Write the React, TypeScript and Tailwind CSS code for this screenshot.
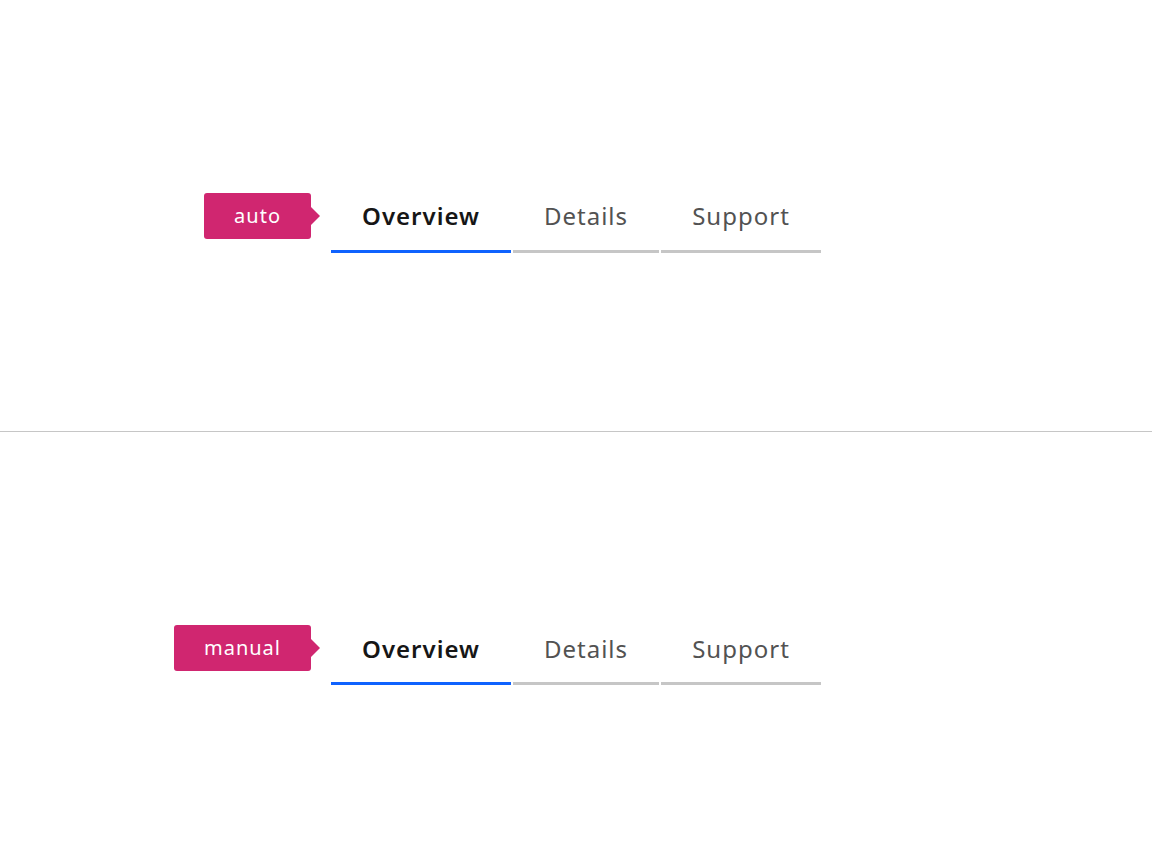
import React from "react";

const tabs = [
  { t: "Overview", w: "w-[180px]" },
  { t: "Details", w: "w-[146px]" },
  { t: "Support", w: "w-[160px]" },
];

function Badge({ label }: { label: string }) {
  return (
    <div className="absolute right-full top-1/2 -translate-y-1/2 mr-[11px] flex items-center">
      <div className="h-[46px] px-[30px] flex items-center rounded-[3px] bg-[#d02670] text-white text-[20px] tracking-[1px] whitespace-nowrap">
        {label}
      </div>
      <div className="w-0 h-0 border-y-[9px] border-y-transparent border-l-[9px] border-l-[#d02670]" />
    </div>
  );
}

function TabRow({ label }: { label: string }) {
  return (
    <div className="relative flex gap-[2px]">
      <Badge label={label} />
      {tabs.map((tab, i) => (
        <div
          key={tab.t}
          className={
            i === 0
              ? `${tab.w} h-[74px] pt-[4px] flex items-center justify-center border-b-[3px] border-[#0f62fe] text-[#161616] font-semibold text-[24px] tracking-[1px]`
              : `${tab.w} h-[74px] pt-[4px] flex items-center justify-center border-b-[3px] border-[#c6c6c6] text-[#525252] text-[24px] tracking-[1px]`
          }
        >
          {tab.t}
        </div>
      ))}
    </div>
  );
}

export default function App() {
  return (
    <div className="w-[1152px] h-[864px] bg-white flex flex-col" style={{ fontFamily: '"Noto Sans", "Open Sans", sans-serif' }}>
      <div className="h-[431px] flex items-center justify-center">
        <TabRow label="auto" />
      </div>
      <div className="h-px bg-[#c6c6c6]" />
      <div className="flex-1 flex items-center justify-center">
        <TabRow label="manual" />
      </div>
    </div>
  );
}
